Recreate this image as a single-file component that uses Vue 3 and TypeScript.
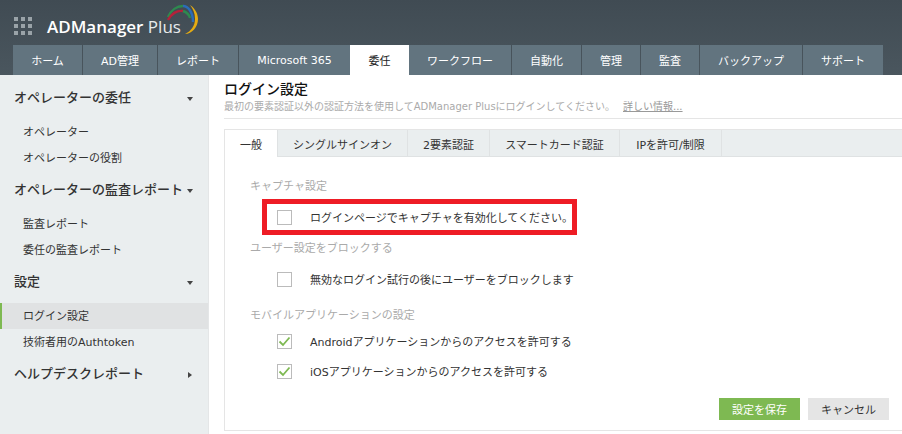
<script setup lang="ts">
interface Nav { label: string; width: number; active?: boolean }
const navs: Nav[] = [
  { label: 'ホーム', width: 69 },
  { label: 'AD管理', width: 74 },
  { label: 'レポート', width: 80 },
  { label: 'Microsoft 365', width: 111 },
  { label: '委任', width: 59, active: true },
  { label: 'ワークフロー', width: 102 },
  { label: '自動化', width: 69 },
  { label: '管理', width: 58 },
  { label: '監査', width: 58 },
  { label: 'バックアップ', width: 102 },
  { label: 'サポート', width: 80 },
]
const groups = [
  { title: 'オペレーターの委任', items: ['オペレーター', 'オペレーターの役割'], open: true },
  { title: 'オペレーターの監査レポート', items: ['監査レポート', '委任の監査レポート'], open: true },
  { title: '設定', items: ['ログイン設定', '技術者用のAuthtoken'], open: true },
  { title: 'ヘルプデスクレポート', items: [], open: false },
]
const tabs = [
  { label: '一般', width: 53 },
  { label: 'シングルサインオン', width: 130 },
  { label: '2要素認証', width: 82 },
  { label: 'スマートカード認証', width: 130 },
  { label: 'IPを許可/制限', width: 102 },
]
</script>

<template>
  <div class="page">
    <header class="top">
      <div class="brand">
        <svg class="grid" width="18" height="18" viewBox="0 0 18 18">
          <g fill="#9aa3a8">
            <rect x="0" y="0" width="4" height="4" /><rect x="7" y="0" width="4" height="4" /><rect x="14" y="0" width="4" height="4" />
            <rect x="0" y="7" width="4" height="4" /><rect x="7" y="7" width="4" height="4" /><rect x="14" y="7" width="4" height="4" />
            <rect x="0" y="14" width="4" height="4" /><rect x="7" y="14" width="4" height="4" /><rect x="14" y="14" width="4" height="4" />
          </g>
        </svg>
        <div class="logo">
          <span class="logo-text">ADManager <span class="plus">Plus</span></span>
          <svg class="swoosh" width="35" height="34" viewBox="0 0 35 34" fill="none">
            <path d="M3 14C6 7 12 3 18 3" stroke="#2e8a4f" stroke-width="2.4" />
            <path d="M18 3C23 3 28 9 28 19" stroke="#2b6cb8" stroke-width="2.4" />
            <path d="M3 17C6 11 12 7 18 8" stroke="#b5213a" stroke-width="2.4" />
            <path d="M18 8C21 9 24 11 25 15" stroke="#2e8a4f" stroke-width="2.4" />
            <path d="M25 2C31 6 33 12 33 16C33 24 27 31 20 31C26 28 30 23 30 16C30 10 28 6 25 2Z" fill="#e6ac12" />
          </svg>
        </div>
      </div>
      <nav class="nav">
        <a
          v-for="n in navs"
          :key="n.label"
          class="nav-item"
          :class="{ active: n.active }"
          :style="{ width: n.width + 'px' }"
        >{{ n.label }}</a>
      </nav>
    </header>

    <div class="body">
      <aside class="side">
        <section v-for="g in groups" :key="g.title" class="group">
          <div class="group-head">
            <span class="head-label">{{ g.title }}</span>
            <i :class="g.open ? 'caret-down' : 'caret-right'"></i>
          </div>
          <ul v-if="g.items.length" class="group-list">
            <li v-for="it in g.items" :key="it" :class="{ current: it === 'ログイン設定' }">{{ it }}</li>
          </ul>
        </section>
      </aside>

      <main class="main">
        <div class="title-block">
          <h1>ログイン設定</h1>
          <p>最初の要素認証以外の認証方法を使用してADManager Plusにログインしてください。<a>詳しい情報...</a></p>
        </div>
        <div class="panel">
          <div class="tabs">
            <div
              v-for="(t, i) in tabs"
              :key="t.label"
              class="tab"
              :class="{ on: i === 0 }"
              :style="{ width: t.width + 'px' }"
            >{{ t.label }}</div>
          </div>
          <div class="form">
            <h2>キャプチャ設定</h2>
            <div class="row highlight">
              <span class="box"></span>
              <span class="txt">ログインページでキャプチャを有効化してください。</span>
            </div>
            <h2 class="h-block">ユーザー設定をブロックする</h2>
            <div class="row plain">
              <span class="box"></span>
              <span class="txt">無効なログイン試行の後にユーザーをブロックします</span>
            </div>
            <h2 class="h-mobile">モバイルアプリケーションの設定</h2>
            <div class="row plain first">
              <span class="box">
                <svg width="13" height="13" viewBox="0 0 13 13" fill="none"><path d="M1.5 6.5L5 10L11.5 2.5" stroke="#7eb952" stroke-width="1.8" /></svg>
              </span>
              <span class="txt">Androidアプリケーションからのアクセスを許可する</span>
            </div>
            <div class="row plain second">
              <span class="box">
                <svg width="13" height="13" viewBox="0 0 13 13" fill="none"><path d="M1.5 6.5L5 10L11.5 2.5" stroke="#7eb952" stroke-width="1.8" /></svg>
              </span>
              <span class="txt">iOSアプリケーションからのアクセスを許可する</span>
            </div>
            <div class="actions">
              <button class="save">設定を保存</button>
              <button class="cancel">キャンセル</button>
            </div>
          </div>
        </div>
      </main>
    </div>
  </div>
</template>

<style>
html, body { margin: 0; background: #fff; overflow: hidden; }
</style>

<style scoped>
.page {
  width: 902px;
  height: 434px;
  overflow: hidden;
  font-family: "DejaVu Sans", "Noto Sans CJK JP", sans-serif;
  font-size: 11px;
  color: #333;
  display: flex;
  flex-direction: column;
}
.top {
  height: 75px;
  background: linear-gradient(#404b53, #4a565e);
  display: flex;
  flex-direction: column;
  flex: none;
}
.brand { height: 45px; display: flex; align-items: flex-start; padding-left: 14px; }
.grid { margin-top: 17px; }
.logo { position: relative; margin-left: 15px; height: 45px; }
.logo-text {
  display: block;
  margin-top: 15px;
  font-family: "Open Sans", sans-serif;
  font-size: 17px;
  line-height: 24px;
  color: #fff;
  font-weight: 600;
  white-space: nowrap;
}
.plus { font-weight: 400; color: #e8ebec; }
.swoosh { position: absolute; left: 118px; top: 3px; }
.nav { display: flex; gap: 1px; padding-left: 13px; height: 30px; }
.nav-item {
  background: #62747f;
  color: #fff;
  display: flex;
  align-items: center;
  justify-content: center;
  height: 30px;
  flex: none;
  white-space: nowrap;
}
.nav-item.active { background: #fff; color: #222; margin: 0 -1px; }
.body { flex: 1; display: flex; min-height: 0; }
.side {
  width: 208px;
  flex: none;
  background: #eaeeef;
  border-right: 1px solid #e4e6e7;
  padding-top: 6px;
}
.group-head {
  height: 32px;
  display: flex;
  align-items: center;
  justify-content: space-between;
  padding-left: 14px;
  padding-right: 15px;
  font-size: 13px;
  font-weight: 500;
  color: #333;
  white-space: nowrap;
}
.head-label { line-height: 30px; padding-top: 2px; }
.caret-down { width: 0; height: 0; border-left: 3.5px solid transparent; border-right: 3.5px solid transparent; border-top: 4px solid #444; margin-top: 3px; }
.caret-right { width: 0; height: 0; border-top: 3.5px solid transparent; border-bottom: 3.5px solid transparent; border-left: 4px solid #444; margin-top: 3px; margin-right: 1px; }
.group-list { list-style: none; margin: 0; padding: 6px 0 2px; }
.group-list li { height: 26px; line-height: 27px; padding-left: 23px; }
.group-list li.current { background: #e0e2e3; box-shadow: inset 2px 0 0 #7eb952; }
.main { flex: 1; min-width: 0; padding: 4px 0 0 15px; }
.title-block { height: 39px; border-bottom: 1px solid #e5e5e5; }
h1 { margin: 0; font-size: 14px; line-height: 20px; font-weight: 500; color: #111; }
p { margin: 0; font-size: 10px; line-height: 16px; color: #aaa; white-space: nowrap; }
p a { margin-left: 8px; color: #999; text-decoration: underline; }
.panel { margin-top: 10px; border: 1px solid #e5e5e5; border-right: 0; height: 302px; box-sizing: border-box; }
.tabs { display: flex; height: 27px; background: #eaeeef; border-bottom: 1px solid #dfe2e3; box-sizing: border-box; }
.tab {
  flex: none;
  display: flex;
  align-items: center;
  justify-content: center;
  box-sizing: border-box;
  border-right: 1px solid #dfe2e3;
  height: 27px;
}
.tab.on { background: #fff; }
.form { padding-left: 25px; padding-right: 13px; position: relative; }
h2 { margin: 0; font-size: 11px; font-weight: 400; color: #aaa; line-height: 16px; padding-top: 22px; }
.h-block { padding-top: 6px; }
.h-mobile { padding-top: 14px; }
.row { display: flex; align-items: center; }
.box {
  width: 15px;
  height: 15px;
  box-sizing: border-box;
  border: 1px solid #bbb;
  flex: none;
  display: flex;
  align-items: center;
  justify-content: center;
}
.txt { margin-left: 18px; white-space: nowrap; }
.highlight {
  width: 315px;
  height: 36px;
  box-sizing: border-box;
  border: 5px solid #ee1c25;
  padding-left: 10px;
  margin-left: 12px;
  margin-top: 4px;
}
.plain { padding-left: 27px; height: 30px; }
.h-block + .plain { margin-top: 7px; }
.first { margin-top: 2px; }
.actions { display: flex; justify-content: flex-end; gap: 8px; margin-top: 12px; }
button {
  width: 81px;
  height: 22px;
  border: 0;
  padding: 0;
  font: inherit;
}
.save { background: #7eb952; color: #fff; }
.cancel { background: #e5e5e5; color: #333; }
</style>
